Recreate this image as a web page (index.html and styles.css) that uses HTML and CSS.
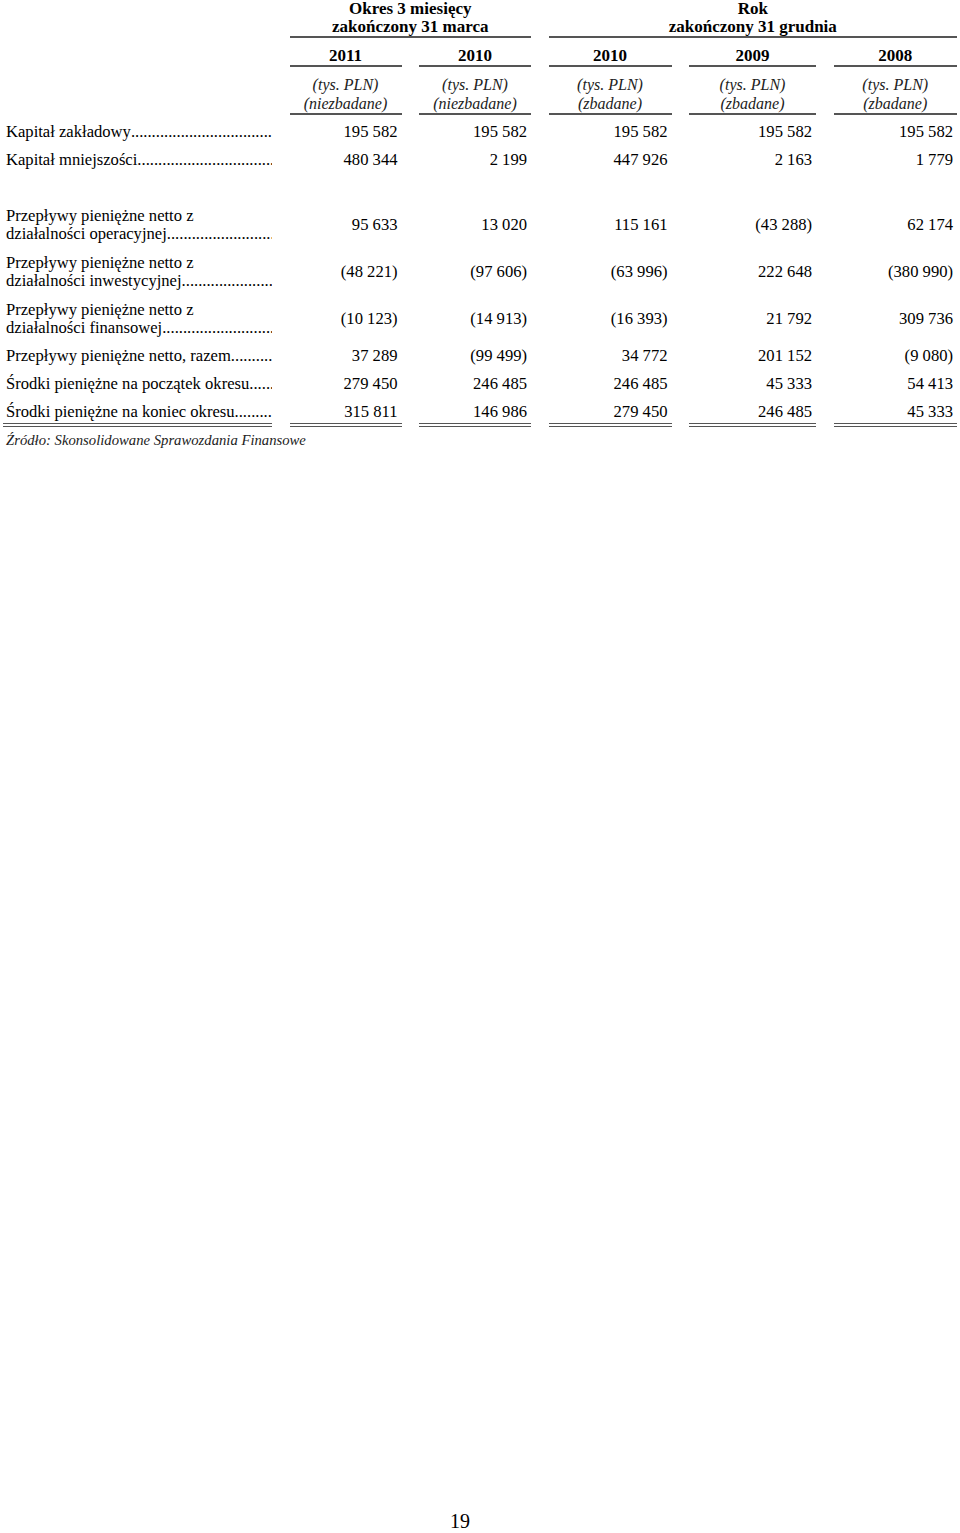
FILE: index.html
```html
<!DOCTYPE html>
<html lang="pl">
<head>
<meta charset="utf-8">
<title>Przepływy pieniężne</title>
<link rel="stylesheet" href="styles.css">
</head>
<body>
<div class="page">
  <div class="grid hdr">
    <div class="c-label"></div>
    <div class="grp span2">Okres 3 miesięcy<br>zakończony 31 marca</div>
    <div class="grp span3">Rok<br>zakończony 31 grudnia</div>

    <div class="c-label"></div>
    <div class="yr">2011</div>
    <div class="yr">2010</div>
    <div class="yr">2010</div>
    <div class="yr">2009</div>
    <div class="yr">2008</div>

    <div class="c-label"></div>
    <div class="unit">(tys. PLN)<br>(niezbadane)</div>
    <div class="unit">(tys. PLN)<br>(niezbadane)</div>
    <div class="unit">(tys. PLN)<br>(zbadane)</div>
    <div class="unit">(tys. PLN)<br>(zbadane)</div>
    <div class="unit">(tys. PLN)<br>(zbadane)</div>
  </div>

  <div class="grid body">
    <div class="lbl r1"><span class="t">Kapitał zakładowy</span><span class="dots"></span></div>
    <div class="num r1">195 582</div><div class="num r1">195 582</div><div class="num r1">195 582</div><div class="num r1">195 582</div><div class="num r1">195 582</div>

    <div class="lbl r1"><span class="t">Kapitał mniejszości </span><span class="dots"></span></div>
    <div class="num r1">480 344</div><div class="num r1">2 199</div><div class="num r1">447 926</div><div class="num r1">2 163</div><div class="num r1">1 779</div>

    <div class="gap"></div>

    <div class="lbl2"><div>Przepływy pieniężne netto z</div><div class="ln"><span class="t">działalności operacyjnej </span><span class="dots"></span></div></div>
    <div class="num r2">95 633</div><div class="num r2">13 020</div><div class="num r2">115 161</div><div class="num r2">(43 288)</div><div class="num r2">62 174</div>

    <div class="lbl2"><div>Przepływy pieniężne netto z</div><div class="ln"><span class="t">działalności inwestycyjnej </span><span class="dots"></span></div></div>
    <div class="num r2">(48 221)</div><div class="num r2">(97 606)</div><div class="num r2">(63 996)</div><div class="num r2">222 648</div><div class="num r2">(380 990)</div>

    <div class="lbl2"><div>Przepływy pieniężne netto z</div><div class="ln"><span class="t">działalności finansowej </span><span class="dots"></span></div></div>
    <div class="num r2">(10 123)</div><div class="num r2">(14 913)</div><div class="num r2">(16 393)</div><div class="num r2">21 792</div><div class="num r2">309 736</div>

    <div class="lbl r1"><span class="t">Przepływy pieniężne netto, razem </span><span class="dots"></span></div>
    <div class="num r1">37 289</div><div class="num r1">(99 499)</div><div class="num r1">34 772</div><div class="num r1">201 152</div><div class="num r1">(9 080)</div>

    <div class="lbl r1"><span class="t">Środki pieniężne na początek okresu</span><span class="dots"></span></div>
    <div class="num r1">279 450</div><div class="num r1">246 485</div><div class="num r1">246 485</div><div class="num r1">45 333</div><div class="num r1">54 413</div>

    <div class="lbl last"><span class="t">Środki pieniężne na koniec okresu </span><span class="dots"></span></div>
    <div class="num last">315 811</div><div class="num last">146 986</div><div class="num last">279 450</div><div class="num last">246 485</div><div class="num last">45 333</div>
  </div>

  <p class="source">Źródło: Skonsolidowane Sprawozdania Finansowe</p>

  <div class="pageno">19</div>
</div>
</body>
</html>
```

FILE: styles.css
```css
html, body {
  margin: 0;
  padding: 0;
  background: #fff;
  overflow: hidden;
}

body {
  font-family: "Liberation Serif", "Times New Roman", serif;
  font-size: 16.6px;
  color: #000;
}

.page {
  height: 1533px;
  display: flex;
  flex-direction: column;
  padding-left: 3px;
  box-sizing: border-box;
  overflow: hidden;
}

.grid {
  display: grid;
  grid-template-columns: 269px 112px 112px 123px 127px 123.5px;
  column-gap: 17.5px;
}

.span2 { grid-column: span 2; }
.span3 { grid-column: span 3; }

.grp {
  font-weight: bold;
  font-size: 17px;
  text-align: center;
  line-height: 18px;
  border-bottom: 2px solid #555;
}

.yr {
  font-weight: bold;
  font-size: 17px;
  text-align: center;
  line-height: 18px;
  padding-top: 9px;
  border-bottom: 2px solid #555;
}

.unit {
  font-style: italic;
  font-size: 16px;
  text-align: center;
  line-height: 19px;
  padding-top: 8px;
  border-bottom: 2px solid #555;
  color: #222;
}

.body {
  margin-top: 3px;
}

.lbl {
  display: flex;
  align-items: center;
  padding-left: 3px;
  white-space: nowrap;
}

.lbl2 {
  padding-left: 3px;
  line-height: 18px;
  height: 47px;
  display: flex;
  flex-direction: column;
  justify-content: center;
  white-space: nowrap;
}

.ln {
  display: flex;
}

.t {
  flex: none;
}

.dots {
  flex: 1;
  overflow: hidden;
  white-space: nowrap;
}

.dots::after {
  content: "................................................................................................................................................";
}

.num {
  text-align: right;
  padding-right: 4px;
  display: flex;
  align-items: center;
  justify-content: flex-end;
  white-space: nowrap;
}

.r1 {
  height: 28px;
  line-height: 18px;
}

.r2 {
  height: 47px;
  line-height: 18px;
}

.gap {
  grid-column: 1 / -1;
  height: 27px;
}

.last {
  line-height: 18px;
  padding-top: 5px;
  padding-bottom: 2px;
  border-bottom: 4px double #555;
  align-items: flex-start;
}

.source {
  margin: 0;
  padding-top: 4px;
  padding-left: 3px;
  font-style: italic;
  font-size: 14.7px;
  line-height: 18px;
  color: #222;
}

.pageno {
  margin-top: auto;
  padding-left: 447px;
  font-size: 20px;
  line-height: 23px;
}
```
